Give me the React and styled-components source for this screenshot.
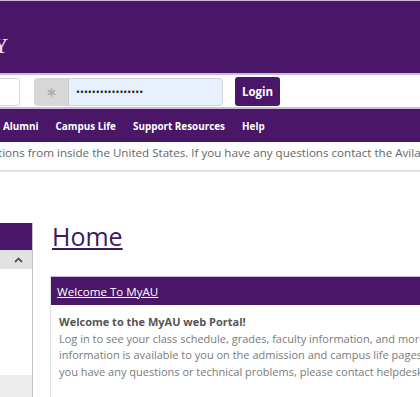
import React from "react";
import styled, { createGlobalStyle } from "styled-components";

const Global = createGlobalStyle`
  html, body { margin: 0; padding: 0; background: #fff; overflow: hidden; }
  body { font-family: "Open Sans", "DejaVu Sans", sans-serif; }
`;

const PURPLE = "#4a1668";
const LILAC = "#cdb9dc";

const Page = styled.div`
  width: 420px;
  height: 397px;
  overflow: hidden;
`;

const Header = styled.header`
  height: 72px;
  background: ${PURPLE};
  border-top: 1px solid ${LILAC};
  border-bottom: 2px solid ${LILAC};
  display: flex;
  align-items: flex-start;
`;

const LogoClip = styled.div`
  width: 8px;
  overflow: hidden;
  display: flex;
  justify-content: flex-end;
  margin-top: 33px;
`;

const LogoText = styled.span`
  flex: none;
  white-space: nowrap;
  font-family: "Liberation Serif", "DejaVu Serif", serif;
  font-weight: 700;
  font-size: 21px;
  line-height: 24px;
  letter-spacing: 1px;
  color: #e6dbef;
  margin-right: -1px;
`;

const LoginBar = styled.form`
  background: #fff;
  border-bottom: 2px solid ${LILAC};
  display: flex;
  align-items: flex-start;
  padding-top: 3px;
  box-sizing: border-box;
  height: 34px;
`;

const UserInput = styled.div`
  width: 26px;
  height: 28px;
  margin-left: -6px;
  border: 1px solid #d8d8d8;
  border-radius: 3px;
  box-sizing: border-box;
  background: #fff;
`;

const PassGroup = styled.div`
  margin-left: 14px;
  width: 189px;
  height: 28px;
  display: flex;
  border: 1px solid #d4d4d4;
  border-radius: 3px;
  overflow: hidden;
  box-sizing: border-box;
`;

const Addon = styled.span`
  width: 33px;
  background: #d7d7d7;
  display: flex;
  align-items: center;
  justify-content: center;
  border-right: 1px solid #cdcdcd;
`;

const PassField = styled.div`
  flex: 1;
  background: #e8f0fe;
  display: flex;
  align-items: center;
  padding-left: 7px;
  font-size: 10.5px;
  letter-spacing: 0;
  color: #222;
`;

const LoginButton = styled.button`
  margin-left: 12px;
  width: 45px;
  height: 29px;
  background: ${PURPLE};
  color: #fff;
  border: none;
  border-radius: 3px;
  font-family: "Open Sans", sans-serif;
  font-weight: 700;
  font-size: 11.5px;
  padding: 0;
  margin-top: -1px;
`;

const Nav = styled.nav`
  height: 33px;
  background: ${PURPLE};
  display: flex;
  align-items: center;
  padding-left: 3px;
  gap: 17px;
`;

const NavItem = styled.a`
  color: #fff;
  font-weight: 700;
  font-size: 9.9px;
  text-decoration: none;
  white-space: nowrap;
`;

const Notice = styled.div`
  height: 28px;
  border-bottom: 2px solid #e2e2e2;
  overflow: hidden;
  white-space: nowrap;
`;

const NoticeText = styled.p`
  margin: 0 0 0 -2px;
  font-size: 11.6px;
  line-height: 22px;
  color: #666;
`;

const Body = styled.div`
  display: flex;
  margin-top: 51px;
  gap: 17px;
`;

const Sidebar = styled.aside`
  width: 32px;
  height: 200px;
  flex: none;
  border-right: 1px solid #c4c4c4;
  display: flex;
  flex-direction: column;
`;

const SideHead = styled.div`
  height: 27px;
  background: ${PURPLE};
`;

const SideToggle = styled.div`
  height: 19px;
  background: #e2e2e2;
  display: flex;
  align-items: center;
  justify-content: flex-end;
  padding-right: 9px;
`;

const SideList = styled.div`
  height: 106px;
`;

const SideFoot = styled.div`
  flex: 1;
  background: #ececec;
`;

const Main = styled.main`
  flex: none;
  width: 500px;
`;

const Title = styled.h1`
  margin: -1px 0 0 2px;
  font-weight: 400;
  font-size: 25px;
  line-height: 29px;
  color: #3d1a5c;
  text-decoration: underline;
  text-decoration-thickness: 2px;
  text-underline-offset: 2px;
`;

const Panel = styled.section`
  margin-top: 25px;
  border: 1px solid #e0e0e0;
  border-top: none;
`;

const PanelHead = styled.div`
  height: 29px;
  background: ${PURPLE};
  display: flex;
  align-items: center;
  padding-left: 6px;
  border-top: 1px solid #cbb5db;
  box-sizing: border-box;
`;

const PanelLink = styled.a`
  color: #fff;
  font-size: 11.6px;
  text-decoration: underline;
  text-underline-offset: 1px;
`;

const PanelBody = styled.div`
  padding: 9px 8px 20px;
  font-size: 11px;
  line-height: 16.6px;
  color: #7a7a7a;
  white-space: nowrap;
`;

const Strong = styled.strong`
  display: block;
  color: #555;
  font-weight: 700;
`;

const Asterisk = () => (
  <svg width="9" height="9" viewBox="0 0 10 10" stroke="#b0b0b0" strokeWidth="1.8" strokeLinecap="round">
    <line x1="5" y1="1" x2="5" y2="9" />
    <line x1="1.5" y1="3" x2="8.5" y2="7" />
    <line x1="1.5" y1="7" x2="8.5" y2="3" />
  </svg>
);

const ChevronUp = () => (
  <svg width="9" height="6" viewBox="0 0 9 6" fill="none" stroke="#555" strokeWidth="1.8">
    <path d="M1 5 L4.5 1.5 L8 5" />
  </svg>
);

export default function App() {
  return (
    <Page>
      <Global />
      <Header>
        <LogoClip>
          <LogoText>AVILA UNIVERSITY</LogoText>
        </LogoClip>
      </Header>
      <LoginBar onSubmit={(e) => e.preventDefault()}>
        <UserInput />
        <PassGroup>
          <Addon>
            <Asterisk />
          </Addon>
          <PassField>•••••••••••••••••</PassField>
        </PassGroup>
        <LoginButton type="submit">Login</LoginButton>
      </LoginBar>
      <Nav>
        <NavItem>Alumni</NavItem>
        <NavItem>Campus Life</NavItem>
        <NavItem>Support Resources</NavItem>
        <NavItem>Help</NavItem>
      </Nav>
      <Notice>
        <NoticeText>
          tions from inside the United States. If you have any questions contact the Avila Helpdesk.
        </NoticeText>
      </Notice>
      <Body>
        <Sidebar>
          <SideHead />
          <SideToggle>
            <ChevronUp />
          </SideToggle>
          <SideList />
          <SideFoot />
        </Sidebar>
        <Main>
          <Title>Home</Title>
          <Panel>
            <PanelHead>
              <PanelLink>Welcome To MyAU</PanelLink>
            </PanelHead>
            <PanelBody>
              <Strong>Welcome to the MyAU web Portal!</Strong>
              Log in to see your class schedule, grades, faculty information, and more. General
              <br />
              information is available to you on the admission and campus life pages. If
              <br />
              you have any questions or technical problems, please contact helpdesk@avila.edu.
            </PanelBody>
          </Panel>
        </Main>
      </Body>
    </Page>
  );
}
